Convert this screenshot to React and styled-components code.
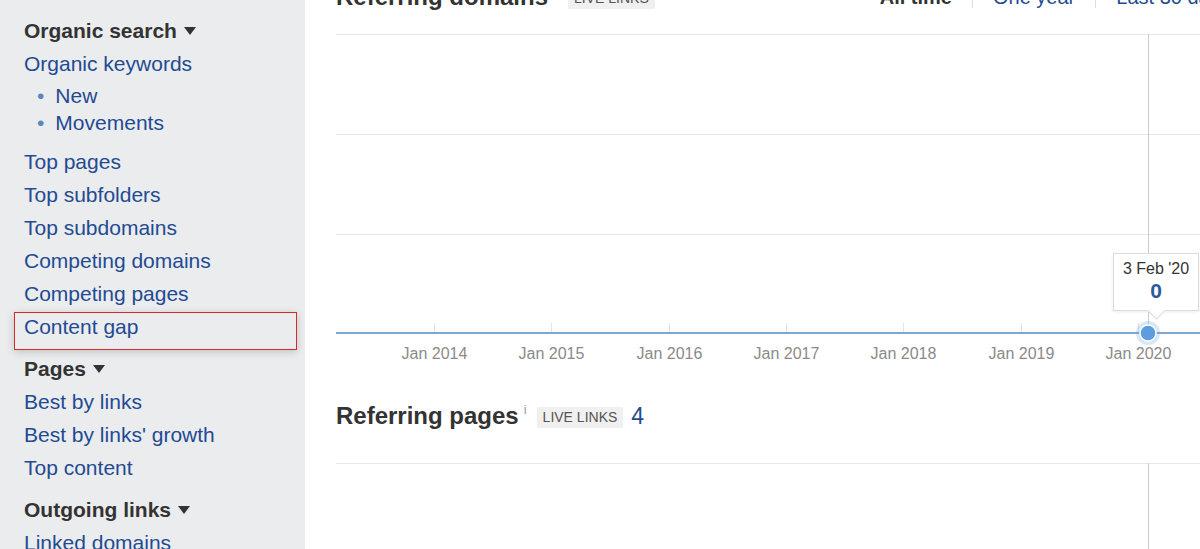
import React from 'react';
import styled, { createGlobalStyle } from 'styled-components';

const GlobalStyle = createGlobalStyle`
  body {
    margin: 0;
    background: #ffffff;
    font-family: "Liberation Sans", Arial, sans-serif;
    overflow: hidden;
  }
`;

const Page = styled.div`
  display: flex;
  width: 1200px;
  height: 549px;
  overflow: hidden;
`;

const Sidebar = styled.nav`
  flex: 0 0 305px;
  box-sizing: border-box;
  padding: 14px 0 0 24px;
  background-color: #ebecee;
`;

const Section = styled.div`
  margin-top: ${props => (props.first ? '0' : '9px')};
`;

const SectionTitle = styled.div`
  display: flex;
  align-items: center;
  font-size: 21px;
  line-height: 33px;
  font-weight: 700;
  color: #333333;
`;

const Caret = styled.span`
  margin-left: 7px;
  width: 0;
  height: 0;
  border-left: 6px solid transparent;
  border-right: 6px solid transparent;
  border-top: 8px solid #333333;
`;

const NavLink = styled.a`
  position: relative;
  display: block;
  font-size: 21px;
  line-height: 33px;
  color: #1f4b92;
  text-decoration: none;
  cursor: pointer;
  ${props =>
    props.highlighted &&
    `
    &::after {
      content: '';
      position: absolute;
      top: 2px;
      bottom: -7px;
      left: -10px;
      right: 8px;
      border: 1px solid #d42a2a;
      box-shadow: 0 2px 8px rgba(0, 0, 0, 0.18);
      pointer-events: none;
    }
  `}
`;

const SubList = styled.ul`
  list-style: none;
  margin: 2px 0 9px;
  padding: 0 0 0 13px;
`;

const SubItem = styled.li`
  font-size: 21px;
  line-height: 27px;
  color: #1f4b92;
  &::before {
    content: '•';
    color: #5b86bf;
    margin-right: 11px;
  }
`;

const Main = styled.main`
  flex: 0 0 auto;
  width: 960px;
  box-sizing: border-box;
  padding-left: 31px;
`;

const HeaderRow = styled.div`
  display: flex;
  align-items: center;
  height: 32px;
  margin-top: ${props => props.top};
  margin-bottom: ${props => props.bottom};
`;

const Heading = styled.h2`
  display: flex;
  align-items: center;
  margin: 0;
  font-size: 24px;
  line-height: 32px;
  font-weight: 700;
  color: #333333;
`;

const Info = styled.sup`
  align-self: flex-start;
  margin: 3px 0 0 5px;
  font-size: 13px;
  line-height: 13px;
  font-weight: 400;
  color: #999999;
`;

const Badge = styled.span`
  margin: 3px 0 0 ${props => props.gap || '10px'};
  padding: 0 6px;
  height: 21px;
  line-height: 21px;
  background: #f0f0f0;
  color: #555555;
  font-size: 14px;
  font-weight: 400;
`;

const Count = styled.span`
  margin-left: 8px;
  font-size: 23px;
  font-weight: 400;
  color: #1f4b92;
`;

const Tabs = styled.div`
  display: flex;
  align-items: center;
  margin-left: 225px;
`;

const Tab = styled.span`
  padding: 0 20px;
  font-size: 20px;
  white-space: nowrap;
  font-weight: ${props => (props.active ? 700 : 400)};
  color: ${props => (props.active ? '#333333' : '#1f4b92')};
  &:first-child {
    padding-left: 0;
  }
  &:last-child {
    padding-right: 0;
  }
`;

const TabDivider = styled.span`
  width: 1px;
  height: 22px;
  background: #dddddd;
`;

const ChartWrap = styled.div`
  position: relative;
  height: ${props => props.h}px;
`;

const Tooltip = styled.div`
  position: absolute;
  left: 777px;
  top: 219px;
  width: 86px;
  height: 58px;
  box-sizing: border-box;
  background: #ffffff;
  border: 1px solid #dcdcdc;
  box-shadow: 0 1px 3px rgba(0, 0, 0, 0.08);
  text-align: center;
  &::after {
    content: '';
    position: absolute;
    left: 36px;
    bottom: -7px;
    width: 12px;
    height: 12px;
    background: #ffffff;
    border-right: 1px solid #dcdcdc;
    border-bottom: 1px solid #dcdcdc;
    transform: rotate(45deg);
  }
`;

const TipDate = styled.div`
  margin-top: 6px;
  font-size: 16px;
  line-height: 18px;
  color: #333333;
`;

const TipValue = styled.div`
  font-size: 21px;
  line-height: 26px;
  font-weight: 700;
  color: #2a5a9c;
`;

const years = ['Jan 2014', 'Jan 2015', 'Jan 2016', 'Jan 2017', 'Jan 2018', 'Jan 2019', 'Jan 2020'];
const CROSS_X = 812.5;

const DomainsChart = () => (
  <svg width="900" height="340">
    {[0.5, 100.5, 200.5].map(y => (
      <line key={y} x1="0" x2="900" y1={y} y2={y} stroke="#e6e6e6" />
    ))}
    {years.map((label, i) => {
      const x = Math.round(98 + i * 117.3) + 0.5;
      return (
        <g key={label}>
          <line x1={x} x2={x} y1="289" y2="299" stroke="#e4e4e4" />
          <text
            x={x}
            y="325"
            textAnchor="middle"
            fontSize="16"
            fill="#8a8a8a"
            fontFamily='"Liberation Sans", Arial, sans-serif'
          >
            {label}
          </text>
        </g>
      );
    })}
    <line x1={CROSS_X} x2={CROSS_X} y1="0" y2="306" stroke="#cccccc" />
    <line x1="0" x2="900" y1="299" y2="299" stroke="#7fa7d4" strokeWidth="2" />
    <circle cx="812" cy="299" r="12" fill="#5a9ee0" opacity="0.25" />
    <circle cx="812" cy="299" r="8" fill="#5b9ddf" stroke="#ffffff" strokeWidth="1.5" />
  </svg>
);

const PagesChart = () => (
  <svg width="900" height="90">
    <line x1="0" x2="900" y1="0.5" y2="0.5" stroke="#e6e6e6" />
    <line x1={CROSS_X} x2={CROSS_X} y1="0" y2="90" stroke="#cccccc" />
  </svg>
);

const nav = [
  {
    title: 'Organic search',
    items: [
      { label: 'Organic keywords', sub: ['New', 'Movements'] },
      { label: 'Top pages' },
      { label: 'Top subfolders' },
      { label: 'Top subdomains' },
      { label: 'Competing domains' },
      { label: 'Competing pages' },
      { label: 'Content gap', highlighted: true },
    ],
  },
  {
    title: 'Pages',
    items: [{ label: 'Best by links' }, { label: "Best by links' growth" }, { label: 'Top content' }],
  },
  {
    title: 'Outgoing links',
    items: [{ label: 'Linked domains' }],
  },
];

const App = () => (
  <>
    <GlobalStyle />
    <Page>
      <Sidebar>
        {nav.map((section, idx) => (
          <Section key={section.title} first={idx === 0}>
            <SectionTitle>
              {section.title}
              <Caret />
            </SectionTitle>
            {section.items.map(item => (
              <React.Fragment key={item.label}>
                <NavLink highlighted={item.highlighted}>{item.label}</NavLink>
                {item.sub && (
                  <SubList>
                    {item.sub.map(s => (
                      <SubItem key={s}>{s}</SubItem>
                    ))}
                  </SubList>
                )}
              </React.Fragment>
            ))}
          </Section>
        ))}
      </Sidebar>
      <Main>
        <HeaderRow top="-19px" bottom="21px">
          <Heading>
            Referring domains
            <Badge gap="20px">LIVE LINKS</Badge>
          </Heading>
          <Tabs>
            <Tab active>All time</Tab>
            <TabDivider />
            <Tab>One year</Tab>
            <TabDivider />
            <Tab>Last 30 days</Tab>
          </Tabs>
        </HeaderRow>
        <ChartWrap h={340}>
          <DomainsChart />
          <Tooltip>
            <TipDate>3 Feb '20</TipDate>
            <TipValue>0</TipValue>
          </Tooltip>
        </ChartWrap>
        <HeaderRow top="26px" bottom="31px">
          <Heading>
            Referring pages
            <Info>i</Info>
            <Badge>LIVE LINKS</Badge>
            <Count>4</Count>
          </Heading>
        </HeaderRow>
        <ChartWrap h={90}>
          <PagesChart />
        </ChartWrap>
      </Main>
    </Page>
  </>
);

export default App;
